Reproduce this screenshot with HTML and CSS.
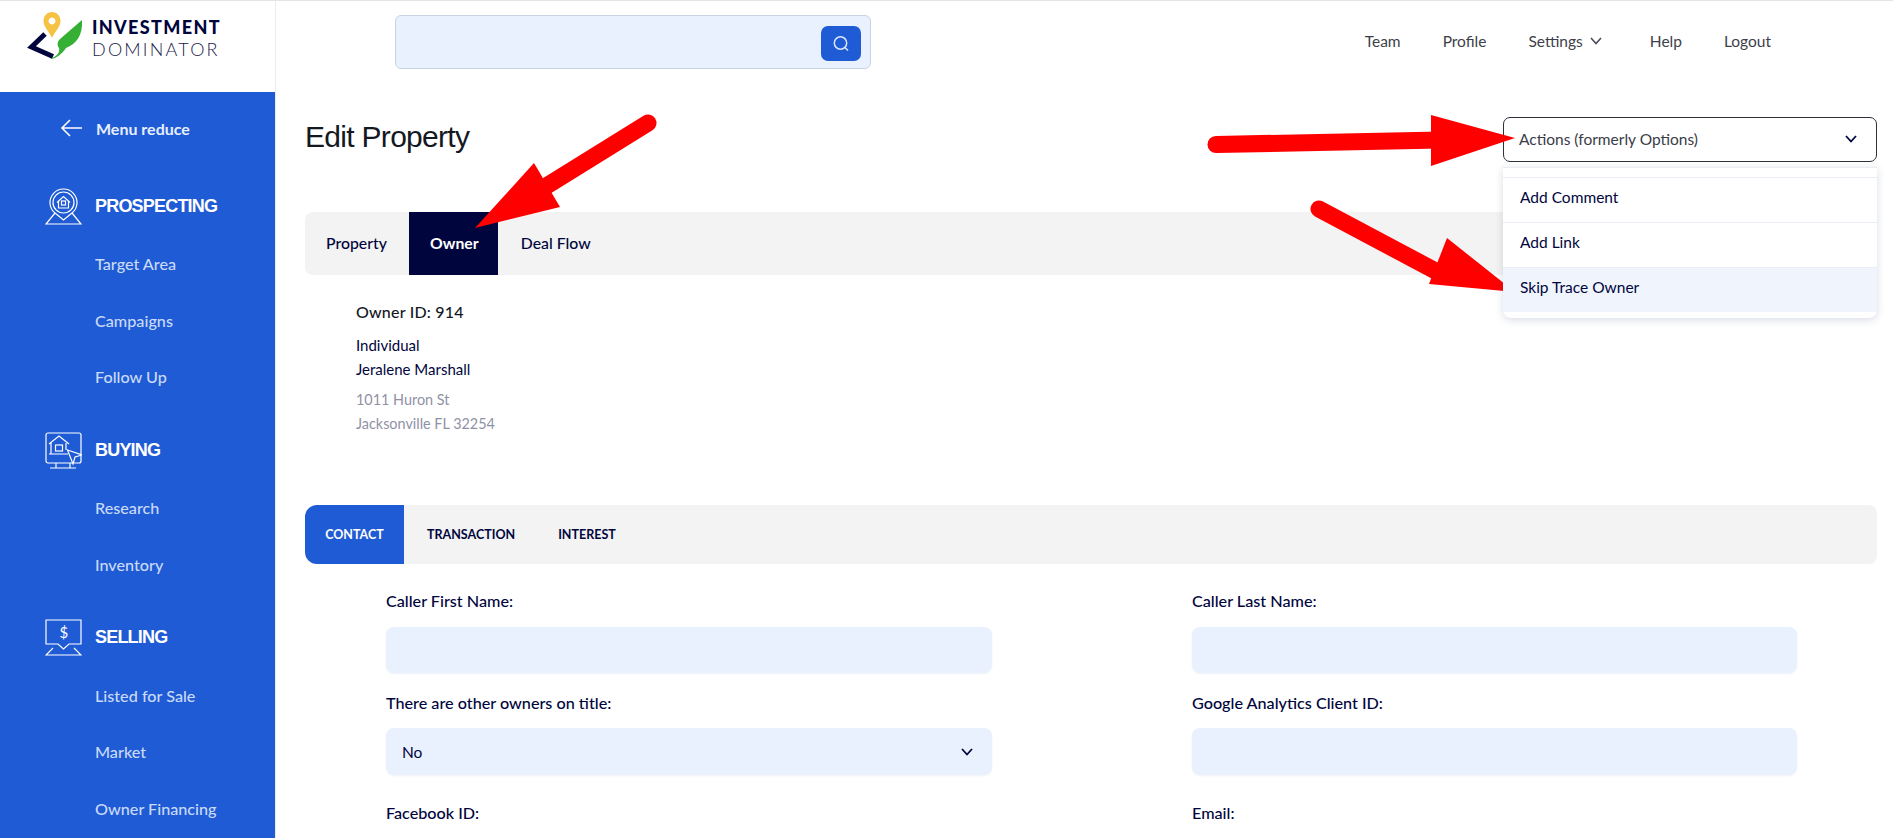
FILE: index.html
```html
<!DOCTYPE html>
<html lang="en">
<head>
<meta charset="utf-8">
<title>Edit Property</title>
<link rel="stylesheet" href="styles.css">
</head>
<body>
<div class="app">
  <aside class="sidebar">
    <div class="logo">
      <svg class="logo-mark" viewBox="0 0 92 62" width="92" height="62">
        <path class="mark-navy" d="M45 33 L31.5 46 L53 55.5"/>
        <path class="mark-green" d="M82 19 L60 38 C57 41 57 44 59 47 C60 51 58 55 50 58 C56 58 62 53 66 47 C76 43 83 35 82 19 Z"/>
        <path class="mark-pin" fill-rule="evenodd" d="M52 11 C47 11 43.500 15 43.500 20 C43.500 26 49 30 52 37 C55 30 60.500 26 60.500 20 C60.500 15 57 11 52 11 Z M52 16.500 A3.500 3.500 0 1 1 51.990 16.500 Z"/>
      </svg>
      <div class="logo-text">
        <span class="logo-top">INVESTMENT</span>
        <span class="logo-bottom">DOMINATOR</span>
      </div>
    </div>
    <nav class="side-nav">
      <a class="reduce">
        <svg class="reduce-icon" viewBox="0 0 24 24" width="24" height="24"><path d="M23 12 H3 M11 4 L3 12 L11 20"/></svg>
        <span>Menu reduce</span>
      </a>
      <section class="group">
        <h3 class="group-head">
          <svg class="group-icon" viewBox="0 0 37 37" width="37" height="37">
            <path d="M10 25 A13.5 13.5 0 1 1 27 25 L18.5 32 Z"/>
            <circle cx="18.5" cy="14.5" r="10.500"/>
            <path d="M12 14.5 L18.5 8.5 L25 14.5 M13.5 13.5 V20 H23.5 V13.5"/>
            <rect x="16.5" y="13" width="4" height="4"/>
            <path d="M10 25 L1 36 H36 L27 25"/>
          </svg>
          <span>PROSPECTING</span>
        </h3>
        <a class="sub">Target Area</a>
        <a class="sub">Campaigns</a>
        <a class="sub">Follow Up</a>
      </section>
      <section class="group">
        <h3 class="group-head">
          <svg class="group-icon" viewBox="0 0 37 37" width="37" height="37">
            <rect x="1" y="1" width="35" height="30" rx="2"/>
            <path d="M5 36 H31 M11 31 V36 M25 31 V36"/>
            <path d="M4 12 L14 4 L24 12 M6 11 V22 M4 22 H23 M21 11 V18"/>
            <rect x="10.5" y="13" width="7" height="6"/>
            <path class="cursor" d="M22.5 18 L37 23 L30 25 L28 32 Z"/>
          </svg>
          <span>BUYING</span>
        </h3>
        <a class="sub">Research</a>
        <a class="sub">Inventory</a>
      </section>
      <section class="group">
        <h3 class="group-head">
          <svg class="group-icon" viewBox="0 0 37 37" width="37" height="37">
            <path d="M1 1 H36 V25 H24 L18.5 30 L13 25 H1 Z"/>
            <path d="M8 29 L1 36 H36 L29 29"/>
            <text class="dollar" x="18.500" y="19" text-anchor="middle">$</text>
          </svg>
          <span>SELLING</span>
        </h3>
        <a class="sub">Listed for Sale</a>
        <a class="sub">Market</a>
        <a class="sub">Owner Financing</a>
      </section>
    </nav>
  </aside>

  <div class="main">
    <header class="topbar">
      <div class="search">
        <button class="search-btn" type="button" aria-label="Search">
          <svg viewBox="0 0 20 20" width="20" height="20"><circle cx="9.5" cy="9" r="6.2"/><path d="M14 13.5 L17 16.5"/></svg>
        </button>
      </div>
      <nav class="top-nav">
        <a>Team</a>
        <a>Profile</a>
        <a class="settings">Settings
          <svg viewBox="0 0 12 8" width="12" height="8"><path d="M1 1 L6 6.5 L11 1"/></svg>
        </a>
        <a>Help</a>
        <a>Logout</a>
      </nav>
    </header>

    <div class="content">
      <div class="title-row">
        <h1 class="title">Edit Property</h1>
        <div class="actions">
          <div class="actions-select">
            <span>Actions (formerly Options)</span>
            <svg class="chev" viewBox="0 0 12 8" width="12" height="8"><path d="M1 1 L6 6.5 L11 1"/></svg>
          </div>
          <ul class="actions-menu">
            <li>Add Comment</li>
            <li>Add Link</li>
            <li class="hover">Skip Trace Owner</li>
          </ul>
        </div>
      </div>

      <div class="tabs">
        <a class="tab">Property</a>
        <a class="tab active">Owner</a>
        <a class="tab">Deal Flow</a>
      </div>

      <div class="owner">
        <p class="owner-id">Owner ID: 914</p>
        <p class="owner-name">Individual</p>
        <p class="owner-name">Jeralene Marshall</p>
        <p class="owner-addr first">1011 Huron St</p>
        <p class="owner-addr">Jacksonville FL 32254</p>
      </div>

      <div class="subtabs">
        <a class="subtab active">CONTACT</a>
        <a class="subtab">TRANSACTION</a>
        <a class="subtab">INTEREST</a>
      </div>

      <form class="form">
        <div class="field"><label class="label">Caller First Name:</label><div class="input"></div></div>
        <div class="field"><label class="label">Caller Last Name:</label><div class="input"></div></div>
        <div class="field tall"><label class="label">There are other owners on title:</label>
          <div class="input select"><span>No</span><svg class="chev" viewBox="0 0 12 8" width="12" height="8"><path d="M1 1 L6 6.5 L11 1"/></svg></div></div>
        <div class="field tall"><label class="label">Google Analytics Client ID:</label><div class="input"></div></div>
        <div class="field"><label class="label">Facebook ID:</label></div>
        <div class="field"><label class="label">Email:</label></div>
      </form>
    </div>
  </div>
</div>

<svg class="arrows" viewBox="0 0 1893 838" width="1893" height="838" aria-hidden="true">
  <g class="arrow">
    <path class="shaft" d="M1216 144.5 L1440 140"/>
    <polygon points="1431,115 1515,138 1431,166"/>
  </g>
  <g class="arrow">
    <path class="shaft" d="M648 123 L540 190"/>
    <polygon points="534,163 560,207 475,228"/>
  </g>
  <g class="arrow">
    <path class="shaft" d="M1319 209 L1445 276"/>
    <polygon points="1447,238 1429,284 1515,292"/>
  </g>
</svg>
</body>
</html>
```
FILE: styles.css
```css
* { box-sizing: border-box; }
html, body { margin: 0; height: 100%; overflow: hidden; background: #fff; }
body { font-family: "Lato", "Liberation Sans", sans-serif; color: #00053d; border-top: 1px solid #e4e4e4; }
p, ul, h1, h3 { margin: 0; padding: 0; }
ul { list-style: none; }

.app { display: flex; height: 837px; }

.sidebar { width: 276px; flex: none; display: flex; flex-direction: column; border-right: 1px solid #ececec; }
.logo { height: 91px; flex: none; display: flex; align-items: flex-start; background: #fff; }
.logo-mark { flex: none; }
.mark-navy { fill: none; stroke: #00053d; stroke-width: 5; }
.mark-green { fill: #35b034; }
.mark-pin { fill: #f5c244; }
.logo-text { display: flex; flex-direction: column; margin-top: 15px; white-space: nowrap; }
.logo-top { font: 900 18px/22px "Lato", sans-serif; color: #00053d; letter-spacing: 1.35px; }
.logo-bottom { font: 300 18px/22px "Lato", sans-serif; color: #1d2148; letter-spacing: 2.2px; }

.side-nav { flex: 1; background: #1f5bd4; padding-top: 16px; overflow: hidden; }
.reduce { display: flex; align-items: center; height: 40px; padding-left: 59px; margin-bottom: 26px; color: #e6eeff; font-size: 16px; font-weight: 700; }
.reduce-icon { flex: none; margin-right: 13px; }
.reduce-icon path { fill: none; stroke: #fff; stroke-width: 1.6; }
.group { margin-bottom: 13px; }
.group-head { display: flex; align-items: center; height: 61.5px; padding: 3px 0 0 45px; color: #fff; font: 700 18px "Liberation Sans", sans-serif; letter-spacing: -0.8px; }
.group-head span { margin-left: -1px; }
.group-icon { flex: none; margin-right: 14px; }
.group-icon path, .group-icon rect, .group-icon circle { fill: none; stroke: #fff; stroke-width: 1.2; }
.group-icon .cursor { fill: #1f5bd4; }
.group-icon .dollar { fill: #fff; font: 400 15px "Lato", sans-serif; }
.sub { display: flex; align-items: center; height: 56.5px; padding-left: 95px; color: #c9daf9; font-size: 16.2px; font-weight: 500; }

.main { flex: 1; min-width: 0; display: flex; flex-direction: column; }
.topbar { height: 91px; flex: none; display: flex; align-items: flex-start; padding: 14px 122px 0 119px; }
.search { width: 476px; height: 54px; display: flex; justify-content: flex-end; padding: 10px 9px 0 0; background: #e9f1fe; border: 1px solid #c9d3e3; border-radius: 6px; }
.search-btn { width: 40px; height: 35px; display: flex; align-items: center; justify-content: center; padding: 0; border: 0; border-radius: 7px; background: #1f5bd4; }
.search-btn svg { fill: none; stroke: #dbe7ff; stroke-width: 1.5; }
.top-nav { margin-left: auto; display: flex; align-items: center; gap: 42px; height: 52px; color: #3d3f4a; font-size: 15.5px; }
.settings { display: flex; align-items: center; gap: 7px; margin-right: 6px; }
.settings svg { fill: none; stroke: #4a4c57; stroke-width: 1.6; }

.content { padding: 0 16px 0 29px; }
.title-row { display: flex; justify-content: space-between; align-items: flex-start; padding-top: 25px; height: 120px; }
.title { font: 400 30px/40px "Liberation Sans", sans-serif; letter-spacing: -0.7px; color: #14181f; }
.actions { position: relative; width: 374px; }
.actions-select { height: 45px; display: flex; align-items: center; justify-content: space-between; padding: 0 19px 2px 15px; background: #fff; border: 1px solid #2e303a; border-radius: 7px; color: #3a3c48; font-size: 15.5px; }
.chev { flex: none; fill: none; stroke: #00053d; stroke-width: 1.8; }
.actions-menu { position: absolute; z-index: 2; left: 0; right: 0; top: 50px; height: 151px; padding-top: 9px; background: #fff; border-radius: 0 0 8px 8px; border-top: 1px solid #e8ecf3; box-shadow: 0 2px 8px rgba(40, 60, 110, .18); font-size: 15.5px; }
.actions-menu li { height: 45px; display: flex; align-items: center; padding: 0 0 6px 17px; border-top: 1px solid #e9edf4; }
.actions-menu .hover { background: #f0f5fd; }

.tabs { display: flex; height: 63px; background: #f3f3f3; border-radius: 8px; }
.tab { display: flex; align-items: center; padding: 0 21px 3px; font-size: 15.8px; font-weight: 500; }
.tab:first-child { padding-right: 22px; }
.tab.active { width: 89px; padding: 0 0 3px 2px; justify-content: center; background: #00053d; color: #fff; font-weight: 700; margin-right: 2px; }

.owner { height: 230px; padding: 25px 0 0 51px; font-size: 15px; }
.owner-id { font-size: 16px; line-height: 24px; margin-bottom: 10px; color: #14181f; font-weight: 500; letter-spacing: 0.2px; }
.owner-name { line-height: 23.5px; }
.owner-addr { line-height: 24px; color: #8f92a6; font-size: 14.4px; }
.owner-addr.first { margin-top: 7px; }

.subtabs { display: flex; height: 59px; background: #f3f3f3; border-radius: 12px 8px 8px 12px; font: 700 12.5px "Lato", sans-serif; }
.subtab { display: flex; align-items: center; padding: 0 22px; }
.subtab.active { width: 99px; padding: 0; justify-content: center; background: #1f5bd4; color: #fff; border-radius: 12px 0 0 12px; margin-right: 1px; }
.subtab:nth-child(2) { padding-right: 21px; }

.form { display: grid; grid-template-columns: 606px 605px; column-gap: 200px; row-gap: 18px; margin: 25px 0 0 81px; }
.field { display: flex; flex-direction: column; }
.field.tall { padding-bottom: 8px; }
.label { height: 24px; line-height: 24px; margin-bottom: 14px; font-size: 16.2px; font-weight: 500; }
.field.tall .label { margin-bottom: 13px; }
.input { height: 46px; background: #e9f1fe; border-radius: 8px; box-shadow: 0 1px 2px rgba(60, 90, 150, .08); }
.field.tall .input { height: 47px; }
.select { display: flex; align-items: center; justify-content: space-between; padding: 0 19px 0 16px; font-size: 15.5px; }

.arrows { position: absolute; left: 0; top: 0; pointer-events: none; }
.arrow polygon { fill: #fe0000; }
.shaft { fill: none; stroke: #fe0000; stroke-width: 17; stroke-linecap: round; }
```
